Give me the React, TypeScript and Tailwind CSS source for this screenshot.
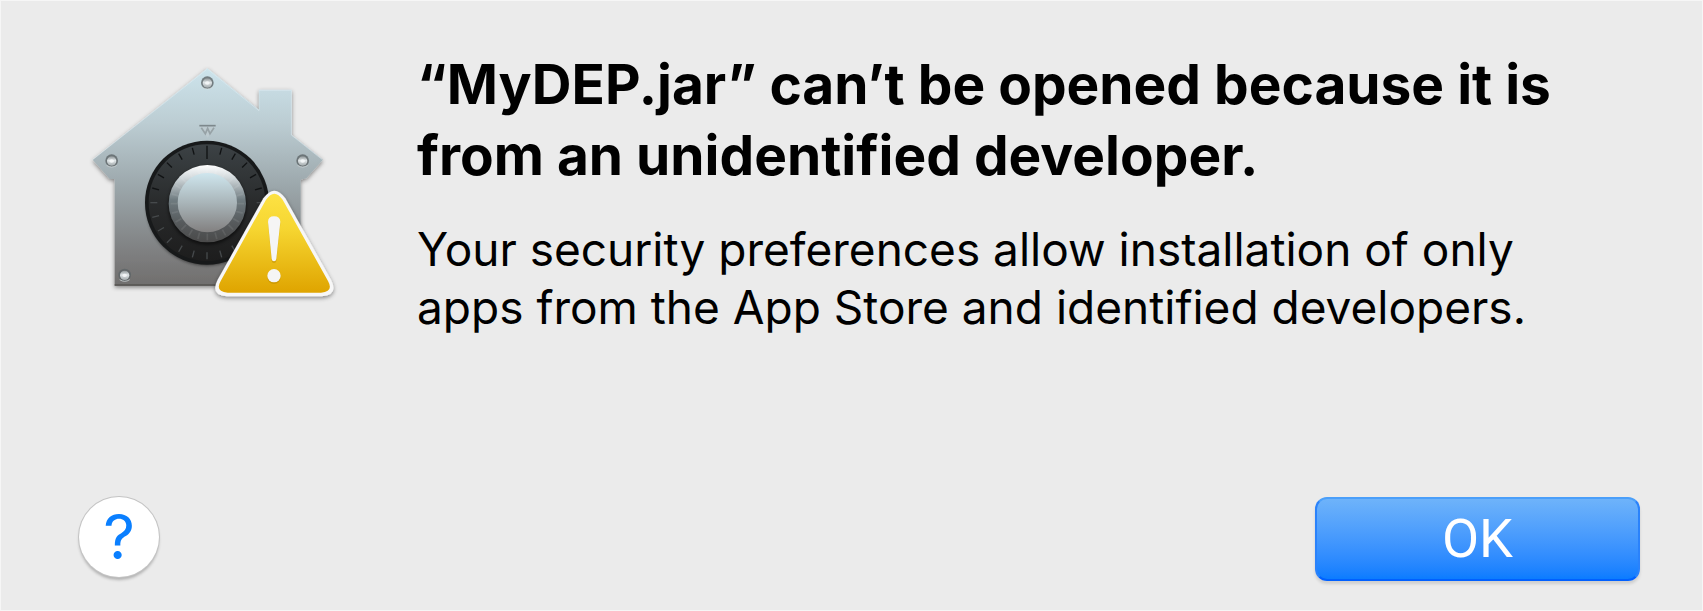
const TICKS = Array.from({ length: 24 }, (_, i) => i * 15);

const SCREWS = [
  { x: 385, y: 101 },
  { x: 98, y: 335 },
  { x: 671, y: 335 },
  { x: 137, y: 678 },
];

const HOUSE =
  "M385 58 L540 182 V122 H638 V258 L732 332 L682 388 L665 392 V710 H107 V390 L92 390 L41 332 Z";
const TRIANGLE =
  "M553 448 Q586 402 619 448 L756 692 Q780 738 728 742 L444 742 Q392 738 416 692 Z";
const TRIANGLE_INNER =
  "M561 452 Q586 416 611 452 L747 696 Q765 728 726 731 L446 731 Q407 728 425 696 Z";

function GatekeeperIcon() {
  return (
    <svg
      viewBox="0 0 810 780"
      className="h-[260px] w-[270px] shrink-0"
      role="img"
      aria-label="Security warning"
    >
      <defs>
        <linearGradient id="steel" x1="0" y1="0" x2="0" y2="1">
          <stop offset="0" stopColor="#cde4ec" />
          <stop offset="0.25" stopColor="#bccdd3" />
          <stop offset="0.55" stopColor="#9ba6aa" />
          <stop offset="0.85" stopColor="#7e7f80" />
          <stop offset="1" stopColor="#706e6d" />
        </linearGradient>
        <linearGradient id="dial" x1="0" y1="0" x2="0" y2="1">
          <stop offset="0" stopColor="#3c4245" />
          <stop offset="0.5" stopColor="#292b2c" />
          <stop offset="1" stopColor="#1d1d1d" />
        </linearGradient>
        <linearGradient id="rim" x1="0" y1="0" x2="0" y2="1">
          <stop offset="0" stopColor="#ffffff" />
          <stop offset="0.16" stopColor="#d3dadd" />
          <stop offset="0.45" stopColor="#6f7b80" />
          <stop offset="0.75" stopColor="#565a5c" />
          <stop offset="1" stopColor="#4a4a4a" />
        </linearGradient>
        <linearGradient id="knob" x1="0" y1="0" x2="0" y2="1">
          <stop offset="0" stopColor="#cfe6ee" />
          <stop offset="0.5" stopColor="#a9b5b9" />
          <stop offset="1" stopColor="#828080" />
        </linearGradient>
        <linearGradient id="yellow" x1="0" y1="0" x2="0" y2="1">
          <stop offset="0" stopColor="#fde244" />
          <stop offset="0.35" stopColor="#f6d631" />
          <stop offset="1" stopColor="#dfa400" />
        </linearGradient>
        <linearGradient id="screw" x1="0" y1="0" x2="0" y2="1">
          <stop offset="0" stopColor="#8f9698" />
          <stop offset="0.45" stopColor="#dfe5e7" />
          <stop offset="1" stopColor="#a4abad" />
        </linearGradient>
        <filter id="shadow" x="-10%" y="-10%" width="120%" height="120%">
          <feDropShadow dx="0" dy="5" stdDeviation="7" floodOpacity="0.45" />
        </filter>
        <filter id="soft" x="-20%" y="-20%" width="140%" height="140%">
          <feGaussianBlur stdDeviation="4" />
        </filter>
      </defs>

      <path d={HOUSE} fill="url(#steel)" filter="url(#shadow)" />
      <path
        d="M41 332 L385 60 L540 185 V124 H637 V258 L730 332"
        fill="none"
        stroke="#e2f0f5"
        strokeWidth="3"
        opacity="0.5"
      />
      <path d="M107 708 H480" stroke="#565452" strokeWidth="4" />

      {SCREWS.map(({ x, y }) => (
        <g key={`${x}-${y}`}>
          <circle cx={x} cy={y} r="19" fill="#5d6466" opacity="0.8" />
          <circle cx={x} cy={y + 1} r="14" fill="url(#screw)" />
          <ellipse cx={x} cy={y + 1} rx="7" ry="5" fill="#f2f5f6" />
          <path
            d={`M${x - 15} ${y + 14} Q${x} ${y + 24} ${x + 15} ${y + 14}`}
            fill="none"
            stroke="#dbe2e4"
            strokeWidth="3"
            opacity="0.7"
          />
        </g>
      ))}

      <path d="M361 229 H410 L386 266 Z" fill="#bdcacf" />
      <path d="M361 230 H410" stroke="#7d888c" strokeWidth="5" />
      <path
        d="M367 236 L379 254 L386 238 L393 254 L405 236"
        fill="none"
        stroke="#97a2a6"
        strokeWidth="5"
      />

      <circle cx="384" cy="468" r="182" fill="#000" opacity="0.5" filter="url(#soft)" />
      <circle cx="384" cy="461" r="186" fill="#17191a" />
      <circle cx="384" cy="461" r="175" fill="url(#dial)" />
      {TICKS.map((angle) => {
        const upper = angle < 90 || angle > 270;
        return (
          <path
            key={angle}
            d={angle === 0 ? "M384 290 V330" : "M384 291 V312"}
            stroke={upper ? "#101213" : "#464a4c"}
            strokeWidth="4"
            transform={`rotate(${angle} 384 461)`}
          />
        );
      })}
      <circle cx="385" cy="470" r="118" fill="#000" opacity="0.5" filter="url(#soft)" />
      <circle cx="385" cy="464" r="116" fill="url(#rim)" />
      {TICKS.map((angle) => (
        <path
          key={angle}
          d="M385 354 V374"
          stroke="#ffffff"
          strokeWidth="5"
          opacity="0.08"
          transform={`rotate(${angle} 385 464)`}
        />
      ))}
      <circle cx="385" cy="461" r="89" fill="url(#knob)" />

      <path d={TRIANGLE} fill="#f7f7f7" filter="url(#shadow)" />
      <path d={TRIANGLE_INNER} fill="url(#yellow)" />
      <path
        d="M567 519 Q567 502 585 502 Q604 502 604 519 L592 630 Q591 637 585 637 Q579 637 578 630 Z"
        fill="#b98a00"
        opacity="0.5"
        transform="translate(0 5)"
      />
      <circle cx="585" cy="685" r="20" fill="#b98a00" opacity="0.5" />
      <path
        d="M567 519 Q567 502 585 502 Q604 502 604 519 L592 630 Q591 637 585 637 Q579 637 578 630 Z"
        fill="#f5f5f5"
      />
      <circle cx="585" cy="680" r="20" fill="#f5f5f5" />
    </svg>
  );
}

export default function App() {
  return (
    <main
      role="alertdialog"
      aria-labelledby="alert-title"
      aria-describedby="alert-message"
      className="flex min-h-screen flex-col justify-between border border-[#f6f6f6] bg-[#ebebeb] pr-[62px] pb-[29px] pl-[78px] pt-[48px] font-[Inter,sans-serif] text-black"
    >
      <div className="flex items-start gap-[68px]">
        <GatekeeperIcon />
        <div className="max-w-[1170px]">
          <h1 id="alert-title" className="text-[55px] leading-[71px] font-bold">
            “MyDEP.jar” can’t be opened because it is from an unidentified developer.
          </h1>
          <p id="alert-message" className="mt-[29px] text-[46px] leading-[58px]">
            Your security preferences allow installation of only apps from the App Store and identified
            developers.
          </p>
        </div>
      </div>
      <div className="flex items-start justify-between">
        <button
          type="button"
          aria-label="Help"
          className="flex size-20 items-center justify-center rounded-full bg-white text-[62px] leading-none text-[#0a7fff] shadow-[0_0_0_1px_#c4c4c4,0_3px_3px_rgba(0,0,0,0.25)]"
        >
          ?
        </button>
        <button
          type="button"
          className="h-[84px] w-[325px] rounded-xl border-2 border-t-[#4a9ffa] border-r-[#2a82fb] border-b-[#0060ff] border-l-[#2a82fb] bg-linear-to-b from-[#6eb3fa] to-[#0a7cff] font-[Roboto,sans-serif] text-[54px] leading-none text-white shadow-[0_3px_3px_rgba(0,0,0,0.12)]"
        >
          OK
        </button>
      </div>
    </main>
  );
}
